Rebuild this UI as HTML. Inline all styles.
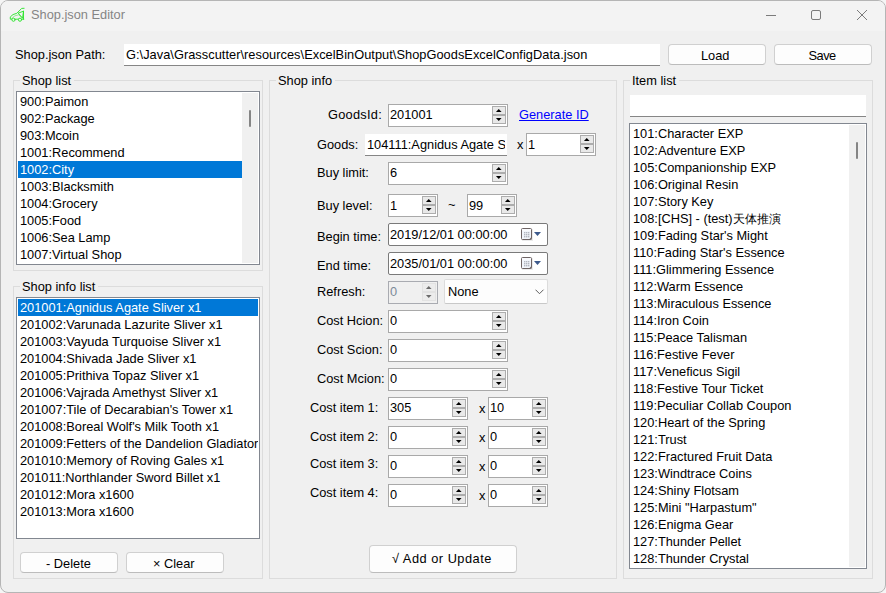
<!DOCTYPE html><html><head><meta charset="utf-8"><style>
html,body{margin:0;padding:0;width:886px;height:593px;overflow:hidden;background:#f5f5f5;}
#w{position:absolute;left:0;top:0;width:884px;height:591px;border:1px solid #b5b5b5;border-radius:8px;background:#f0f0f0;overflow:hidden;}
.b{position:absolute;box-sizing:border-box;}
.t{position:absolute;white-space:pre;font-family:"Liberation Sans",sans-serif;line-height:14px;color:#000;}
.gl{font-size:12.8px;background:#f0f0f0;padding:0 3px 0 2px;line-height:14px;}
.lb{border:1px solid #828790;background:#fff;}
</style></head><body><div id="w"></div><div id="c" style="position:absolute;left:0;top:0;width:886px;height:593px;">
<div class="b" style="left:1px;top:1px;width:884px;height:30px;background:#f3f3f3;border-radius:7px 7px 0 0;"></div>
<svg class="b" style="left:6px;top:4px" width="22" height="22" viewBox="0 0 22 22" fill="none" stroke="#2ee52e" stroke-width="0.95" stroke-linejoin="round" stroke-linecap="round"><path d="M18.1,4.3 L15.7,4.4 L10.8,9.3 Q6.5,10 4.3,12.9 L4.3,15.2 L17.8,15.2"/><path d="M17.5,7.2 L17.5,15.2 M12.6,9 L17.5,7.2 L16.6,13.8 Z"/><path d="M6,14.3 Q7.5,11.3 12.6,10.8 L15.8,13.4" stroke-opacity="0.55"/><circle cx="7.5" cy="15.7" r="1.6" fill="#f3f3f3"/><circle cx="14" cy="15.7" r="1.6" fill="#f3f3f3"/></svg>
<div class="t" style="left:31px;top:7.56px;font-size:12.8px;color:#858585;">Shop.json Editor</div>
<div class="b" style="left:766px;top:15px;width:10px;height:1px;background:#7b7b7b;"></div>
<div class="b" style="left:811px;top:10px;width:10px;height:10px;border:1px solid #7b7b7b;border-radius:2px;"></div>
<svg class="b" style="left:856px;top:9px" width="12" height="12" viewBox="0 0 12 12"><path d="M1,1 L11,11 M11,1 L1,11" stroke="#7b7b7b" stroke-width="1"/></svg>
<div class="t" style="left:15px;top:47.56px;font-size:12.8px;color:#000;">Shop.json Path:</div>
<div class="b" style="left:124px;top:44px;width:536px;height:22px;background:#fff;border-bottom:1px solid #868686;"></div>
<div class="t" style="left:126px;top:47.56px;font-size:12.8px;color:#000;letter-spacing:0.035px;">G:\Java\Grasscutter\resources\ExcelBinOutput\ShopGoodsExcelConfigData.json</div>
<div class="b" style="left:668px;top:44px;width:98px;height:21px;background:#fdfdfd;border:1px solid #d0d0d0;border-bottom-color:#bcbcbc;border-radius:4px;"></div>
<div class="t" style="left:701px;top:48.56px;font-size:12.8px;color:#000;">Load</div>
<div class="b" style="left:774px;top:44px;width:98px;height:21px;background:#fdfdfd;border:1px solid #d0d0d0;border-bottom-color:#bcbcbc;border-radius:4px;"></div>
<div class="t" style="left:808.5px;top:48.56px;font-size:12.8px;color:#000;letter-spacing:-0.5px;">Save</div>
<div class="b" style="left:13px;top:80px;width:250px;height:191px;border:1px solid #dcdcdc;"></div>
<div class="t gl" style="left:20px;top:74px;">Shop list</div>
<div class="b" style="left:13px;top:286px;width:250px;height:293px;border:1px solid #dcdcdc;"></div>
<div class="t gl" style="left:20px;top:280px;">Shop info list</div>
<div class="b" style="left:269px;top:80px;width:348px;height:499px;border:1px solid #dcdcdc;"></div>
<div class="t gl" style="left:276px;top:74px;">Shop info</div>
<div class="b" style="left:623px;top:80px;width:250px;height:499px;border:1px solid #dcdcdc;"></div>
<div class="t gl" style="left:630px;top:74px;">Item list</div>
<div class="b lb" style="left:16px;top:91px;width:244px;height:174px;"></div>
<div class="t" style="left:20px;top:93px;line-height:17px;font-size:12.8px;color:#000;width:222px;overflow:hidden;">900:Paimon</div>
<div class="t" style="left:20px;top:110px;line-height:17px;font-size:12.8px;color:#000;width:222px;overflow:hidden;">902:Package</div>
<div class="t" style="left:20px;top:127px;line-height:17px;font-size:12.8px;color:#000;width:222px;overflow:hidden;">903:Mcoin</div>
<div class="t" style="left:20px;top:144px;line-height:17px;font-size:12.8px;color:#000;width:222px;overflow:hidden;">1001:Recommend</div>
<div class="b" style="left:18px;top:161px;width:224px;height:17px;background:#0078d7;"></div>
<div class="t" style="left:20px;top:161px;line-height:17px;font-size:12.8px;color:#fff;width:222px;overflow:hidden;">1002:City</div>
<div class="t" style="left:20px;top:178px;line-height:17px;font-size:12.8px;color:#000;width:222px;overflow:hidden;">1003:Blacksmith</div>
<div class="t" style="left:20px;top:195px;line-height:17px;font-size:12.8px;color:#000;width:222px;overflow:hidden;">1004:Grocery</div>
<div class="t" style="left:20px;top:212px;line-height:17px;font-size:12.8px;color:#000;width:222px;overflow:hidden;">1005:Food</div>
<div class="t" style="left:20px;top:229px;line-height:17px;font-size:12.8px;color:#000;width:222px;overflow:hidden;">1006:Sea Lamp</div>
<div class="t" style="left:20px;top:246px;line-height:17px;font-size:12.8px;color:#000;width:222px;overflow:hidden;">1007:Virtual Shop</div>
<div class="b" style="left:242px;top:93px;width:16px;height:170px;background:#f0f0f0;"></div>
<div class="b" style="left:249px;top:110px;width:2px;height:17px;background:#858585;border-radius:1px;"></div>
<div class="b lb" style="left:16px;top:297px;width:244px;height:242px;"></div>
<div class="b" style="left:18px;top:299px;width:240px;height:17px;background:#0078d7;"></div>
<div class="t" style="left:20px;top:299px;line-height:17px;font-size:12.8px;color:#fff;width:238px;overflow:hidden;">201001:Agnidus Agate Sliver x1</div>
<div class="t" style="left:20px;top:316px;line-height:17px;font-size:12.8px;color:#000;width:238px;overflow:hidden;">201002:Varunada Lazurite Sliver x1</div>
<div class="t" style="left:20px;top:333px;line-height:17px;font-size:12.8px;color:#000;width:238px;overflow:hidden;">201003:Vayuda Turquoise Sliver x1</div>
<div class="t" style="left:20px;top:350px;line-height:17px;font-size:12.8px;color:#000;width:238px;overflow:hidden;">201004:Shivada Jade Sliver x1</div>
<div class="t" style="left:20px;top:367px;line-height:17px;font-size:12.8px;color:#000;width:238px;overflow:hidden;">201005:Prithiva Topaz Sliver x1</div>
<div class="t" style="left:20px;top:384px;line-height:17px;font-size:12.8px;color:#000;width:238px;overflow:hidden;">201006:Vajrada Amethyst Sliver x1</div>
<div class="t" style="left:20px;top:401px;line-height:17px;font-size:12.8px;color:#000;width:238px;overflow:hidden;">201007:Tile of Decarabian's Tower x1</div>
<div class="t" style="left:20px;top:418px;line-height:17px;font-size:12.8px;color:#000;width:238px;overflow:hidden;">201008:Boreal Wolf's Milk Tooth x1</div>
<div class="t" style="left:20px;top:435px;line-height:17px;font-size:12.8px;color:#000;width:238px;overflow:hidden;">201009:Fetters of the Dandelion Gladiator x1</div>
<div class="t" style="left:20px;top:452px;line-height:17px;font-size:12.8px;color:#000;width:238px;overflow:hidden;">201010:Memory of Roving Gales x1</div>
<div class="t" style="left:20px;top:469px;line-height:17px;font-size:12.8px;color:#000;width:238px;overflow:hidden;">201011:Northlander Sword Billet x1</div>
<div class="t" style="left:20px;top:486px;line-height:17px;font-size:12.8px;color:#000;width:238px;overflow:hidden;">201012:Mora x1600</div>
<div class="t" style="left:20px;top:503px;line-height:17px;font-size:12.8px;color:#000;width:238px;overflow:hidden;">201013:Mora x1600</div>
<div class="b" style="left:20px;top:552px;width:98px;height:21px;background:#fdfdfd;border:1px solid #d0d0d0;border-bottom-color:#bcbcbc;border-radius:4px;"></div>
<div class="t" style="left:46px;top:556.56px;font-size:12.8px;color:#000;">- Delete</div>
<div class="b" style="left:126px;top:552px;width:98px;height:21px;background:#fdfdfd;border:1px solid #d0d0d0;border-bottom-color:#bcbcbc;border-radius:4px;"></div>
<div class="t" style="left:153px;top:556.56px;font-size:12.8px;color:#000;">× Clear</div>
<div class="b" style="left:630px;top:95px;width:236px;height:22px;background:#fff;border-bottom:1px solid #868686;"></div>
<div class="b lb" style="left:629px;top:123px;width:238px;height:446px;"></div>
<div class="t" style="left:633px;top:125px;line-height:17px;font-size:12.8px;color:#000;width:216px;overflow:hidden;">101:Character EXP</div>
<div class="t" style="left:633px;top:142px;line-height:17px;font-size:12.8px;color:#000;width:216px;overflow:hidden;">102:Adventure EXP</div>
<div class="t" style="left:633px;top:159px;line-height:17px;font-size:12.8px;color:#000;width:216px;overflow:hidden;">105:Companionship EXP</div>
<div class="t" style="left:633px;top:176px;line-height:17px;font-size:12.8px;color:#000;width:216px;overflow:hidden;">106:Original Resin</div>
<div class="t" style="left:633px;top:193px;line-height:17px;font-size:12.8px;color:#000;width:216px;overflow:hidden;">107:Story Key</div>
<div class="t" style="left:633px;top:210px;line-height:17px;font-size:12.8px;color:#000;width:216px;overflow:hidden;">108:[CHS] - (test)<span style="font-size:12px">天体推演</span></div>
<div class="t" style="left:633px;top:227px;line-height:17px;font-size:12.8px;color:#000;width:216px;overflow:hidden;">109:Fading Star's Might</div>
<div class="t" style="left:633px;top:244px;line-height:17px;font-size:12.8px;color:#000;width:216px;overflow:hidden;">110:Fading Star's Essence</div>
<div class="t" style="left:633px;top:261px;line-height:17px;font-size:12.8px;color:#000;width:216px;overflow:hidden;">111:Glimmering Essence</div>
<div class="t" style="left:633px;top:278px;line-height:17px;font-size:12.8px;color:#000;width:216px;overflow:hidden;">112:Warm Essence</div>
<div class="t" style="left:633px;top:295px;line-height:17px;font-size:12.8px;color:#000;width:216px;overflow:hidden;">113:Miraculous Essence</div>
<div class="t" style="left:633px;top:312px;line-height:17px;font-size:12.8px;color:#000;width:216px;overflow:hidden;">114:Iron Coin</div>
<div class="t" style="left:633px;top:329px;line-height:17px;font-size:12.8px;color:#000;width:216px;overflow:hidden;">115:Peace Talisman</div>
<div class="t" style="left:633px;top:346px;line-height:17px;font-size:12.8px;color:#000;width:216px;overflow:hidden;">116:Festive Fever</div>
<div class="t" style="left:633px;top:363px;line-height:17px;font-size:12.8px;color:#000;width:216px;overflow:hidden;">117:Veneficus Sigil</div>
<div class="t" style="left:633px;top:380px;line-height:17px;font-size:12.8px;color:#000;width:216px;overflow:hidden;">118:Festive Tour Ticket</div>
<div class="t" style="left:633px;top:397px;line-height:17px;font-size:12.8px;color:#000;width:216px;overflow:hidden;">119:Peculiar Collab Coupon</div>
<div class="t" style="left:633px;top:414px;line-height:17px;font-size:12.8px;color:#000;width:216px;overflow:hidden;">120:Heart of the Spring</div>
<div class="t" style="left:633px;top:431px;line-height:17px;font-size:12.8px;color:#000;width:216px;overflow:hidden;">121:Trust</div>
<div class="t" style="left:633px;top:448px;line-height:17px;font-size:12.8px;color:#000;width:216px;overflow:hidden;">122:Fractured Fruit Data</div>
<div class="t" style="left:633px;top:465px;line-height:17px;font-size:12.8px;color:#000;width:216px;overflow:hidden;">123:Windtrace Coins</div>
<div class="t" style="left:633px;top:482px;line-height:17px;font-size:12.8px;color:#000;width:216px;overflow:hidden;">124:Shiny Flotsam</div>
<div class="t" style="left:633px;top:499px;line-height:17px;font-size:12.8px;color:#000;width:216px;overflow:hidden;">125:Mini "Harpastum"</div>
<div class="t" style="left:633px;top:516px;line-height:17px;font-size:12.8px;color:#000;width:216px;overflow:hidden;">126:Enigma Gear</div>
<div class="t" style="left:633px;top:533px;line-height:17px;font-size:12.8px;color:#000;width:216px;overflow:hidden;">127:Thunder Pellet</div>
<div class="t" style="left:633px;top:550px;line-height:17px;font-size:12.8px;color:#000;width:216px;overflow:hidden;">128:Thunder Crystal</div>
<div class="b" style="left:849px;top:125px;width:16px;height:442px;background:#f0f0f0;"></div>
<div class="b" style="left:856px;top:142px;width:2px;height:17px;background:#858585;border-radius:1px;"></div>
<div class="t" style="left:328px;top:107.56px;font-size:12.8px;color:#000;letter-spacing:0.25px;">GoodsId:</div>
<div class="b" style="left:388px;top:104px;width:120px;height:23px;border:1px solid #a9a9a9;background:#fff;"></div>
<div class="b" style="left:492px;top:106px;width:14px;height:18px;border:1px solid #adadad;background:#e9e9e9;"></div>
<div class="b" style="left:493px;top:114px;width:12px;height:2px;background:#adadad;"></div>
<svg class="b" style="left:492px;top:106px" width="14" height="18" viewBox="0 0 14 18"><path d="M3.95,6 L9.55,6 L6.75,3 Z" fill="#000"/><path d="M3.95,12 L9.55,12 L6.75,15 Z" fill="#000"/></svg>
<div class="t" style="left:390px;top:107.56px;font-size:12.8px;color:#000;">201001</div>
<div class="t" style="left:519px;top:107.56px;font-size:12.8px;color:#0000ff;text-decoration:underline;">Generate ID</div>
<div class="t" style="left:317px;top:137.56px;font-size:12.8px;color:#000;">Goods:</div>
<div class="b" style="left:365px;top:134px;width:142px;height:22px;background:#fff;border-bottom:1px solid #868686;"></div>
<div class="t" style="left:367px;top:137.56px;font-size:12.8px;color:#000;width:138px;overflow:hidden;">104111:Agnidus Agate Sliver</div>
<div class="t" style="left:517px;top:137.56px;font-size:12.8px;color:#000;">x</div>
<div class="b" style="left:526px;top:133px;width:70px;height:23px;border:1px solid #a9a9a9;background:#fff;"></div>
<div class="b" style="left:580px;top:135px;width:14px;height:18px;border:1px solid #adadad;background:#e9e9e9;"></div>
<div class="b" style="left:581px;top:143px;width:12px;height:2px;background:#adadad;"></div>
<svg class="b" style="left:580px;top:135px" width="14" height="18" viewBox="0 0 14 18"><path d="M3.95,6 L9.55,6 L6.75,3 Z" fill="#000"/><path d="M3.95,12 L9.55,12 L6.75,15 Z" fill="#000"/></svg>
<div class="t" style="left:528px;top:137.56px;font-size:12.8px;color:#000;">1</div>
<div class="t" style="left:317px;top:165.56px;font-size:12.8px;color:#000;">Buy limit:</div>
<div class="b" style="left:388px;top:162px;width:120px;height:23px;border:1px solid #a9a9a9;background:#fff;"></div>
<div class="b" style="left:492px;top:164px;width:14px;height:18px;border:1px solid #adadad;background:#e9e9e9;"></div>
<div class="b" style="left:493px;top:172px;width:12px;height:2px;background:#adadad;"></div>
<svg class="b" style="left:492px;top:164px" width="14" height="18" viewBox="0 0 14 18"><path d="M3.95,6 L9.55,6 L6.75,3 Z" fill="#000"/><path d="M3.95,12 L9.55,12 L6.75,15 Z" fill="#000"/></svg>
<div class="t" style="left:390px;top:165.56px;font-size:12.8px;color:#000;">6</div>
<div class="t" style="left:317px;top:198.56px;font-size:12.8px;color:#000;">Buy level:</div>
<div class="b" style="left:388px;top:194px;width:50px;height:23px;border:1px solid #a9a9a9;background:#fff;"></div>
<div class="b" style="left:422px;top:196px;width:14px;height:18px;border:1px solid #adadad;background:#e9e9e9;"></div>
<div class="b" style="left:423px;top:204px;width:12px;height:2px;background:#adadad;"></div>
<svg class="b" style="left:422px;top:196px" width="14" height="18" viewBox="0 0 14 18"><path d="M3.95,6 L9.55,6 L6.75,3 Z" fill="#000"/><path d="M3.95,12 L9.55,12 L6.75,15 Z" fill="#000"/></svg>
<div class="t" style="left:390px;top:198.56px;font-size:12.8px;color:#000;">1</div>
<div class="t" style="left:448px;top:197.56px;font-size:12.8px;color:#000;">~</div>
<div class="b" style="left:467px;top:194px;width:50px;height:23px;border:1px solid #a9a9a9;background:#fff;"></div>
<div class="b" style="left:501px;top:196px;width:14px;height:18px;border:1px solid #adadad;background:#e9e9e9;"></div>
<div class="b" style="left:502px;top:204px;width:12px;height:2px;background:#adadad;"></div>
<svg class="b" style="left:501px;top:196px" width="14" height="18" viewBox="0 0 14 18"><path d="M3.95,6 L9.55,6 L6.75,3 Z" fill="#000"/><path d="M3.95,12 L9.55,12 L6.75,15 Z" fill="#000"/></svg>
<div class="t" style="left:469px;top:198.56px;font-size:12.8px;color:#000;">99</div>
<div class="t" style="left:317px;top:229.56px;font-size:12.8px;color:#000;">Begin time:</div>
<div class="b" style="left:388px;top:223px;width:160px;height:23px;background:#fff;border:1px solid #7a7a7a;border-radius:2px;"></div>
<div class="t" style="left:390px;top:227.56px;font-size:12.8px;color:#000;">2019/12/01 00:00:00</div>
<svg class="b" style="left:521px;top:228px" width="22" height="14" viewBox="0 0 22 14"><rect x="1" y="1" width="11" height="12" fill="#d8d8d8" opacity="0.5"/><rect x="0.5" y="0.5" width="10" height="11" rx="1" fill="#f2f5fb" stroke="#6e6464"/><rect x="1" y="1.5" width="9" height="1" fill="#ffffff"/><g fill="#b3b7c0"><rect x="3" y="4" width="1.4" height="1.4"/><rect x="5" y="4" width="1.4" height="1.4"/><rect x="7" y="4" width="1.4" height="1.4"/><rect x="3" y="6" width="1.4" height="1.4"/><rect x="5" y="6" width="1.4" height="1.4"/><rect x="7" y="6" width="1.4" height="1.4"/><rect x="3" y="8" width="1.4" height="1.4"/><rect x="5" y="8" width="1.4" height="1.4"/><rect x="7" y="8" width="1.4" height="1.4"/></g><path d="M8,11.5 L10.5,9 L10.5,11.5 Z" fill="#6e6464"/><path d="M13,4 L20,4 L16.5,8 Z" fill="#3d5a8c"/></svg>
<div class="t" style="left:317px;top:258.56px;font-size:12.8px;color:#000;">End time:</div>
<div class="b" style="left:388px;top:252px;width:160px;height:23px;background:#fff;border:1px solid #7a7a7a;border-radius:2px;"></div>
<div class="t" style="left:390px;top:256.56px;font-size:12.8px;color:#000;">2035/01/01 00:00:00</div>
<svg class="b" style="left:521px;top:257px" width="22" height="14" viewBox="0 0 22 14"><rect x="1" y="1" width="11" height="12" fill="#d8d8d8" opacity="0.5"/><rect x="0.5" y="0.5" width="10" height="11" rx="1" fill="#f2f5fb" stroke="#6e6464"/><rect x="1" y="1.5" width="9" height="1" fill="#ffffff"/><g fill="#b3b7c0"><rect x="3" y="4" width="1.4" height="1.4"/><rect x="5" y="4" width="1.4" height="1.4"/><rect x="7" y="4" width="1.4" height="1.4"/><rect x="3" y="6" width="1.4" height="1.4"/><rect x="5" y="6" width="1.4" height="1.4"/><rect x="7" y="6" width="1.4" height="1.4"/><rect x="3" y="8" width="1.4" height="1.4"/><rect x="5" y="8" width="1.4" height="1.4"/><rect x="7" y="8" width="1.4" height="1.4"/></g><path d="M8,11.5 L10.5,9 L10.5,11.5 Z" fill="#6e6464"/><path d="M13,4 L20,4 L16.5,8 Z" fill="#3d5a8c"/></svg>
<div class="t" style="left:317px;top:284.56px;font-size:12.8px;color:#000;">Refresh:</div>
<div class="b" style="left:388px;top:281px;width:50px;height:23px;border:1px solid #a9abb1;background:#f0f0f0;"></div>
<div class="b" style="left:422px;top:283px;width:14px;height:18px;border:1px solid #e2e2e2;background:#ececec;"></div>
<div class="b" style="left:423px;top:291px;width:12px;height:2px;background:#e2e2e2;"></div>
<svg class="b" style="left:422px;top:283px" width="14" height="18" viewBox="0 0 14 18"><path d="M3.95,6 L9.55,6 L6.75,3 Z" fill="#6b6b6b"/><path d="M3.95,12 L9.55,12 L6.75,15 Z" fill="#6b6b6b"/></svg>
<div class="t" style="left:390px;top:284.56px;font-size:12.8px;color:#7d8a99;">0</div>
<div class="b" style="left:444px;top:279px;width:104px;height:25px;background:#fdfdfd;border:1px solid #dcdcdc;border-bottom-color:#c8c8c8;border-radius:2px;"></div>
<div class="t" style="left:448px;top:284.56px;font-size:12.8px;color:#000;">None</div>
<svg class="b" style="left:535px;top:289px" width="10" height="7" viewBox="0 0 10 7"><path d="M0.5,0.7 L4.5,4.7 L8.5,0.7" fill="none" stroke="#5d5d5d" stroke-width="1"/></svg>
<div class="t" style="left:317px;top:313.56px;font-size:12.8px;color:#000;">Cost Hcion:</div>
<div class="b" style="left:388px;top:310px;width:120px;height:23px;border:1px solid #a9a9a9;background:#fff;"></div>
<div class="b" style="left:492px;top:312px;width:14px;height:18px;border:1px solid #adadad;background:#e9e9e9;"></div>
<div class="b" style="left:493px;top:320px;width:12px;height:2px;background:#adadad;"></div>
<svg class="b" style="left:492px;top:312px" width="14" height="18" viewBox="0 0 14 18"><path d="M3.95,6 L9.55,6 L6.75,3 Z" fill="#000"/><path d="M3.95,12 L9.55,12 L6.75,15 Z" fill="#000"/></svg>
<div class="t" style="left:390px;top:313.56px;font-size:12.8px;color:#000;">0</div>
<div class="t" style="left:317px;top:342.56px;font-size:12.8px;color:#000;">Cost Scion:</div>
<div class="b" style="left:388px;top:339px;width:120px;height:23px;border:1px solid #a9a9a9;background:#fff;"></div>
<div class="b" style="left:492px;top:341px;width:14px;height:18px;border:1px solid #adadad;background:#e9e9e9;"></div>
<div class="b" style="left:493px;top:349px;width:12px;height:2px;background:#adadad;"></div>
<svg class="b" style="left:492px;top:341px" width="14" height="18" viewBox="0 0 14 18"><path d="M3.95,6 L9.55,6 L6.75,3 Z" fill="#000"/><path d="M3.95,12 L9.55,12 L6.75,15 Z" fill="#000"/></svg>
<div class="t" style="left:390px;top:342.56px;font-size:12.8px;color:#000;">0</div>
<div class="t" style="left:317px;top:371.56px;font-size:12.8px;color:#000;">Cost Mcion:</div>
<div class="b" style="left:388px;top:368px;width:120px;height:23px;border:1px solid #a9a9a9;background:#fff;"></div>
<div class="b" style="left:492px;top:370px;width:14px;height:18px;border:1px solid #adadad;background:#e9e9e9;"></div>
<div class="b" style="left:493px;top:378px;width:12px;height:2px;background:#adadad;"></div>
<svg class="b" style="left:492px;top:370px" width="14" height="18" viewBox="0 0 14 18"><path d="M3.95,6 L9.55,6 L6.75,3 Z" fill="#000"/><path d="M3.95,12 L9.55,12 L6.75,15 Z" fill="#000"/></svg>
<div class="t" style="left:390px;top:371.56px;font-size:12.8px;color:#000;">0</div>
<div class="t" style="left:310px;top:400.56px;font-size:12.8px;color:#000;">Cost item 1:</div>
<div class="b" style="left:388px;top:397px;width:80px;height:23px;border:1px solid #a9a9a9;background:#fff;"></div>
<div class="b" style="left:452px;top:399px;width:14px;height:18px;border:1px solid #adadad;background:#e9e9e9;"></div>
<div class="b" style="left:453px;top:407px;width:12px;height:2px;background:#adadad;"></div>
<svg class="b" style="left:452px;top:399px" width="14" height="18" viewBox="0 0 14 18"><path d="M3.95,6 L9.55,6 L6.75,3 Z" fill="#000"/><path d="M3.95,12 L9.55,12 L6.75,15 Z" fill="#000"/></svg>
<div class="t" style="left:390px;top:400.56px;font-size:12.8px;color:#000;">305</div>
<div class="t" style="left:479px;top:401.56px;font-size:12.8px;color:#000;">x</div>
<div class="b" style="left:488px;top:397px;width:60px;height:23px;border:1px solid #a9a9a9;background:#fff;"></div>
<div class="b" style="left:532px;top:399px;width:14px;height:18px;border:1px solid #adadad;background:#e9e9e9;"></div>
<div class="b" style="left:533px;top:407px;width:12px;height:2px;background:#adadad;"></div>
<svg class="b" style="left:532px;top:399px" width="14" height="18" viewBox="0 0 14 18"><path d="M3.95,6 L9.55,6 L6.75,3 Z" fill="#000"/><path d="M3.95,12 L9.55,12 L6.75,15 Z" fill="#000"/></svg>
<div class="t" style="left:490px;top:400.56px;font-size:12.8px;color:#000;">10</div>
<div class="t" style="left:310px;top:429.56px;font-size:12.8px;color:#000;">Cost item 2:</div>
<div class="b" style="left:388px;top:426px;width:80px;height:23px;border:1px solid #a9a9a9;background:#fff;"></div>
<div class="b" style="left:452px;top:428px;width:14px;height:18px;border:1px solid #adadad;background:#e9e9e9;"></div>
<div class="b" style="left:453px;top:436px;width:12px;height:2px;background:#adadad;"></div>
<svg class="b" style="left:452px;top:428px" width="14" height="18" viewBox="0 0 14 18"><path d="M3.95,6 L9.55,6 L6.75,3 Z" fill="#000"/><path d="M3.95,12 L9.55,12 L6.75,15 Z" fill="#000"/></svg>
<div class="t" style="left:390px;top:429.56px;font-size:12.8px;color:#000;">0</div>
<div class="t" style="left:479px;top:430.56px;font-size:12.8px;color:#000;">x</div>
<div class="b" style="left:488px;top:426px;width:60px;height:23px;border:1px solid #a9a9a9;background:#fff;"></div>
<div class="b" style="left:532px;top:428px;width:14px;height:18px;border:1px solid #adadad;background:#e9e9e9;"></div>
<div class="b" style="left:533px;top:436px;width:12px;height:2px;background:#adadad;"></div>
<svg class="b" style="left:532px;top:428px" width="14" height="18" viewBox="0 0 14 18"><path d="M3.95,6 L9.55,6 L6.75,3 Z" fill="#000"/><path d="M3.95,12 L9.55,12 L6.75,15 Z" fill="#000"/></svg>
<div class="t" style="left:490px;top:429.56px;font-size:12.8px;color:#000;">0</div>
<div class="t" style="left:310px;top:456.56px;font-size:12.8px;color:#000;">Cost item 3:</div>
<div class="b" style="left:388px;top:455px;width:80px;height:23px;border:1px solid #a9a9a9;background:#fff;"></div>
<div class="b" style="left:452px;top:457px;width:14px;height:18px;border:1px solid #adadad;background:#e9e9e9;"></div>
<div class="b" style="left:453px;top:465px;width:12px;height:2px;background:#adadad;"></div>
<svg class="b" style="left:452px;top:457px" width="14" height="18" viewBox="0 0 14 18"><path d="M3.95,6 L9.55,6 L6.75,3 Z" fill="#000"/><path d="M3.95,12 L9.55,12 L6.75,15 Z" fill="#000"/></svg>
<div class="t" style="left:390px;top:458.56px;font-size:12.8px;color:#000;">0</div>
<div class="t" style="left:479px;top:459.56px;font-size:12.8px;color:#000;">x</div>
<div class="b" style="left:488px;top:455px;width:60px;height:23px;border:1px solid #a9a9a9;background:#fff;"></div>
<div class="b" style="left:532px;top:457px;width:14px;height:18px;border:1px solid #adadad;background:#e9e9e9;"></div>
<div class="b" style="left:533px;top:465px;width:12px;height:2px;background:#adadad;"></div>
<svg class="b" style="left:532px;top:457px" width="14" height="18" viewBox="0 0 14 18"><path d="M3.95,6 L9.55,6 L6.75,3 Z" fill="#000"/><path d="M3.95,12 L9.55,12 L6.75,15 Z" fill="#000"/></svg>
<div class="t" style="left:490px;top:458.56px;font-size:12.8px;color:#000;">0</div>
<div class="t" style="left:310px;top:485.56px;font-size:12.8px;color:#000;">Cost item 4:</div>
<div class="b" style="left:388px;top:484px;width:80px;height:23px;border:1px solid #a9a9a9;background:#fff;"></div>
<div class="b" style="left:452px;top:486px;width:14px;height:18px;border:1px solid #adadad;background:#e9e9e9;"></div>
<div class="b" style="left:453px;top:494px;width:12px;height:2px;background:#adadad;"></div>
<svg class="b" style="left:452px;top:486px" width="14" height="18" viewBox="0 0 14 18"><path d="M3.95,6 L9.55,6 L6.75,3 Z" fill="#000"/><path d="M3.95,12 L9.55,12 L6.75,15 Z" fill="#000"/></svg>
<div class="t" style="left:390px;top:487.56px;font-size:12.8px;color:#000;">0</div>
<div class="t" style="left:479px;top:488.56px;font-size:12.8px;color:#000;">x</div>
<div class="b" style="left:488px;top:484px;width:60px;height:23px;border:1px solid #a9a9a9;background:#fff;"></div>
<div class="b" style="left:532px;top:486px;width:14px;height:18px;border:1px solid #adadad;background:#e9e9e9;"></div>
<div class="b" style="left:533px;top:494px;width:12px;height:2px;background:#adadad;"></div>
<svg class="b" style="left:532px;top:486px" width="14" height="18" viewBox="0 0 14 18"><path d="M3.95,6 L9.55,6 L6.75,3 Z" fill="#000"/><path d="M3.95,12 L9.55,12 L6.75,15 Z" fill="#000"/></svg>
<div class="t" style="left:490px;top:487.56px;font-size:12.8px;color:#000;">0</div>
<div class="b" style="left:369px;top:545px;width:148px;height:28px;background:#fdfdfd;border:1px solid #d0d0d0;border-bottom-color:#bcbcbc;border-radius:4px;"></div>
<div class="t" style="left:392px;top:551.56px;font-size:12.8px;color:#000;letter-spacing:0.5px;">√ Add or Update</div>
</div></body></html>
